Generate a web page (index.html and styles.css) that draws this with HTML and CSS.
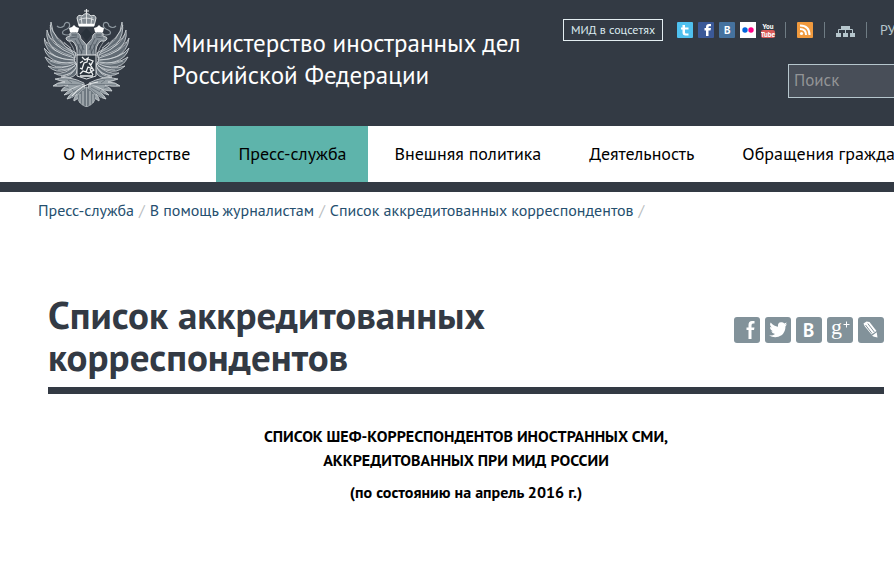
FILE: index.html
```html
<!DOCTYPE html>
<html lang="ru">
<head>
<meta charset="utf-8">
<meta name="viewport" content="width=device-width, initial-scale=1">
<title>Список аккредитованных корреспондентов</title>
<link rel="stylesheet" href="styles.css">
</head>
<body>
<header class="header">
  <svg class="emblem" viewBox="14 9 86 98" aria-hidden="true">
    <defs>
      <g id="half">
        <g fill="#626c75" stroke="#d3d8dc" stroke-width=".8">
          <path d="M46 53Q22 41 21 22Q18 34 27 45Q36 53 45 58Z"/>
          <path d="M44 55Q19 45 17 30Q15 42 26 51Q36 57 45 60Z"/>
          <path d="M44 58Q18 51 14 38Q15 51 27 57Q36 61 45 62Z"/>
          <path d="M44 60Q22 59 14 48Q17 59 29 62Q37 64 46 64Z"/>
          <path d="M45 62Q26 65 15 57Q20 68 32 67Q40 66 47 65Z"/>
          <path d="M46 63Q31 71 18 66Q26 74 37 70Q43 68 47 66Z"/>
          <path d="M46 64Q37 75 24 73Q32 78 41 73Q46 69 48 67Z"/>
          <path d="M47 65Q43 77 31 77Q41 80 46 74L48 68Z"/>
        </g>
        <path d="M20 25Q24 38 41 48M18 34Q25 45 42 52M17 42Q27 52 42 56M18 52Q30 60 43 60M20 61Q32 66 43 63M28 70Q38 70 45 66M33 76Q41 74 46 68M39 41Q43 46 46 55M34 42Q40 46 44 55M30 40Q35 47 43 53" fill="none" stroke="#d3d8dc" stroke-width=".6"/>
        <path d="M27 26Q30 29 34 26Q35 21 39 23Q41 27 37 29Q31 31 33 34Q37 36 41 34" fill="none" stroke="#8f99a1" stroke-width="1.2"/>
        <path d="M40 33Q46 30 50 35Q50 39 54 42L56.500 45V56H47Q48 45 42 41Q37 42 36 39Q35 37 40 36Z" fill="#858e96" stroke="#dfe3e5" stroke-width=".8"/>
        <path d="M40 38L47 37M45 40L52 53M48 38L54 50M42 35L47 35M49 44L48 54M53 45L51 55" stroke="#414b55" stroke-width=".7"/>
        <path d="M40 32L39 28L42 27L44 25L46 27L49 28L48 32Z" fill="#fff"/>
        <g fill="#98a1a7" stroke="#e0e4e6" stroke-width=".7">
          <path d="M54 83Q39 75 25 79Q30 81 35 82Q27 82 23 86Q31 87 38 85Q32 88 31 91Q41 91 54 84Z"/>
          <path d="M54 84Q40 88 34 95Q40 94 44 91Q38 96 37 99Q43 98 47 94Q43 99 44 101Q50 98 55 88Z"/>
        </g>
        <path d="M29 79Q43 78 54 84M27 85Q41 84 52 85M37 95L52 87M41 98L54 88M38 80L42 83M33 86L39 88M42 89L44 92" stroke="#505b64" stroke-width=".6" fill="none"/>
        <path d="M56.500 87Q50 90 47 96Q48 104 56.500 107Z" fill="#6f7981" stroke="#b5bbc0" stroke-width=".7"/>
        <path d="M50 94V103M53 91V105" stroke="#cdd2d5" stroke-width=".9"/>
      </g>
    </defs>
    <use href="#half"/>
    <use href="#half" transform="matrix(-1 0 0 1 113 0)"/>
    <path d="M56.500 9V15M54 11H59" stroke="#e5e8ea" stroke-width="1.200"/>
    <path d="M49 26L47 18Q48 14 52 16Q56.500 11 61 16Q65 14 66 18L64 26Z" fill="#838c94" stroke="#e4e7e9"/>
    <path d="M51 17L52 24M56.500 14V24M62 17L61 24M49 20Q56 16 64 20" fill="none" stroke="#eef0f1" stroke-width=".8"/>
    <path d="M49 25H64" stroke="#fff" stroke-width="2.500"/>
    <path d="M56.500 28L62 34L56.500 41L51 34Z" fill="#29323b"/>
    <path d="M47 55H66V76L56.500 79L47 76Z" fill="#2c353e" stroke="#d9dde0"/>
    <path d="M52 57L55 60L58 58L57 62L54 63L52 69L50 68M58 59L63 61L61 65L59 63L63 69L58 67L56 72M50 74L53 71L59 73L64 70M50 63L53 61M60 69L63 75M50 76H63" fill="none" stroke="#f0f2f3" stroke-width="1.300"/>
    <path d="M42 96Q51 84 68 82" fill="none" stroke="#e9eced" stroke-width="1.200"/>
  </svg>
  <div class="title">Министерство иностранных дел<br>Российской Федерации</div>
  <div class="tools">
    <div class="toolbar">
      <a class="social-label" href="#">МИД в соцсетях</a>
      <div class="social">
        <a href="#" aria-label="Twitter"><svg class="icon" viewBox="0 0 16 16"><rect width="16" height="16" rx="1" fill="#4fc0ef"/><path d="M5.500 3V5.500H4V7.500H5.500V10.500Q5.500 13.500 8.500 13.500H11.500V11.500H9Q8 11.500 8 10.500V7.500H11.500V5.500H8V3Z" fill="#fff"/></svg></a>
        <a href="#" aria-label="Facebook"><svg class="icon" viewBox="0 0 16 16"><rect width="16" height="16" rx="1" fill="#3b5998"/><path d="M8 14V8.500H6.500V6H8V5Q8 2 11 2H13V4.300H11.500Q10.500 4.300 10.500 5.300V6H13L12.500 8.500H10.500V14Z" fill="#fff"/></svg></a>
        <a href="#" aria-label="ВКонтакте"><svg class="icon" viewBox="0 0 16 16"><rect width="16" height="16" rx="1" fill="#45729f"/><text class="glyph" x="5" y="12">B</text></svg></a>
        <a href="#" aria-label="Flickr"><svg class="icon" viewBox="0 0 16 16"><rect width="16" height="16" fill="#fff"/><circle cx="5" cy="8" r="2.700" fill="#0063dc"/><circle cx="11" cy="8" r="2.700" fill="#ff0084"/></svg></a>
        <a href="#" aria-label="YouTube"><svg class="icon" viewBox="0 0 16 16"><text class="tiny" x="7" y="7">You</text><rect y="8" width="14" height="8" rx="2" fill="#d95a59"/><text class="tiny" x="7" y="15">Tube</text></svg></a>
      </div>
      <a class="cell" href="#" aria-label="RSS"><svg class="icon" viewBox="0 0 16 16"><rect width="16" height="16" rx="1" fill="#f19a3e"/><circle cx="4.500" cy="11.500" r="1.600" fill="#fff"/><path d="M3 7Q9 7 9 13M3 3.500Q12.500 3.500 12.500 13" fill="none" stroke="#fff" stroke-width="2"/></svg></a>
      <a class="cell" href="#" aria-label="Карта сайта"><svg class="map" viewBox="0 0 19 16"><path d="M5 4H14V7H5ZM0 11H5V15H0ZM7 11H12V15H7ZM14 11H19V15H14Z" fill="#b6c6cd"/><path d="M2.500 11V7.500H16.500V11M9.500 7V11" fill="none" stroke="#b6c6cd"/></svg></a>
      <a class="cell lang" href="#">РУС</a>
    </div>
    <input class="search" type="search" placeholder="Поиск" aria-label="Поиск">
  </div>
</header>
<nav class="nav">
  <a href="#">О Министерстве</a>
  <a class="active" href="#">Пресс-служба</a>
  <a href="#">Внешняя политика</a>
  <a href="#">Деятельность</a>
  <a href="#">Обращения граждан</a>
</nav>
<div class="crumbs"><a href="#">Пресс-служба</a><span>/</span><a href="#">В помощь журналистам</a><span>/</span><a href="#">Список аккредитованных корреспондентов</a><span>/</span></div>
<main class="main">
  <div class="heading">
    <h1>Список аккредитованных корреспондентов</h1>
    <div class="share">
      <a href="#" aria-label="Facebook"><svg viewBox="0 0 26 26"><path d="M14.500 22V13H12.500V10.500H14.500V8Q14.500 4 18 4H20.500V6.500H19Q17.500 6.500 17.500 8.500V10.500H20.500L20 13H17.500V22Z"/></svg></a>
      <a href="#" aria-label="Twitter"><svg viewBox="0 0 26 26"><path d="M4 18.500Q8 18.700 10 17Q7 16.500 6.300 14.200H8Q5 13 5 10L6.700 10.500Q4 8 5.700 5.500Q9 9.500 13 9.700Q12.500 5.500 16 5.300Q18 5 19.300 6.500L21.700 5.500Q21.300 7 20.200 7.800L22 7.300L20.500 9.200Q20.500 15 16.500 18.300Q10.500 22 4 18.500Z"/></svg></a>
      <a href="#" aria-label="ВКонтакте"><svg viewBox="0 0 26 26"><text class="share-b" x="7" y="20">B</text></svg></a>
      <a href="#" aria-label="Google+"><svg viewBox="0 0 26 26"><text class="share-g" x="4" y="17">g</text><path d="M16.500 7.500H22.500M19.500 4.500V10.500" stroke="#fff"/></svg></a>
      <a href="#" aria-label="LiveJournal"><svg viewBox="0 0 26 26"><path d="M5.500 6.500L8.500 4.500L11.500 5L18.500 14L13.500 17.500L6.500 9Z"/><path d="M14 18.700L18.700 15.300L19.500 20.500L16 19.800Z"/><path d="M7.500 8L14 16.500M9.800 6.500L16.300 15" stroke="#82929a"/></svg></a>
    </div>
  </div>
  <div class="intro">
    <p>СПИСОК ШЕФ-КОРРЕСПОНДЕНТОВ ИНОСТРАННЫХ СМИ,<br>АККРЕДИТОВАННЫХ ПРИ МИД РОССИИ</p>
    <p>(по состоянию на апрель 2016 г.)</p>
  </div>
</main>
</body>
</html>
```
FILE: styles.css
```css
* { box-sizing: border-box; }
body {
  margin: 0;
  overflow-x: hidden;
  background: #fff;
  color: #000;
  font-family: "PT Sans", Roboto, "Noto Sans", sans-serif;
  font-size: 16px;
}
a { color: inherit; text-decoration: none; }
svg { display: block; }

.header {
  display: grid;
  grid-template-columns: 128px 391px 1fr;
  min-height: 126px;
  padding-left: 44px;
  overflow: hidden;
  background: #333a44;
  color: #fff;
}
.emblem { width: 86px; margin-top: 9px; }
.title { padding-top: 27px; font-size: 25px; line-height: 32px; white-space: nowrap; }
.tools { min-width: 0; padding-top: 18px; }
.toolbar { display: flex; align-items: center; height: 24px; }
.social-label {
  flex: none;
  width: 100px;
  border: 1px solid #e4eef2;
  color: #dcebf0;
  font-size: 12px;
  line-height: 20px;
  text-align: center;
  white-space: nowrap;
}
.social { display: flex; flex: none; gap: 5px; padding: 0 8px 0 14px; }
.icon { width: 16px; height: 16px; }
.map { width: 19px; height: 16px; }
.cell { flex: none; height: 16px; padding: 0 11px; border-left: 1px solid #6f7c84; }
.lang { padding-left: 13px; color: #b6c6cd; font-size: 14px; line-height: 16px; }
.glyph { fill: #fff; font-size: 11px; font-weight: bold; }
.tiny { fill: #fff; font-size: 7px; font-weight: bold; text-anchor: middle; }
.search {
  display: block;
  width: 220px;
  height: 34px;
  margin: 22px 0 0 225px;
  padding: 0 5px 2px;
  border: 1px solid #b6c6cd;
  border-radius: 0;
  background: #484e58;
  color: #fff;
  font-family: inherit;
  font-size: 17px;
}
.search::placeholder { color: #929496; opacity: 1; }

.nav {
  display: flex;
  gap: 4px;
  padding-left: 41px;
  overflow: hidden;
  border-bottom: 10px solid #333a44;
}
.nav a { flex: none; padding: 0 22px; font-size: 18px; line-height: 56px; }
.nav .active { background: #5eb4ab; }

.crumbs {
  display: flex;
  flex-wrap: wrap;
  gap: 0 5px;
  padding: 6px 38px 8px;
  color: #b9bdc0;
  font-size: 16px;
  line-height: 24px;
}
.crumbs a { color: #26506f; }

.main { padding: 64px 10px 0 48px; }
.heading {
  display: flex;
  align-items: center;
  justify-content: space-between;
  padding-bottom: 9px;
  border-bottom: 7px solid #333a44;
}
h1 { max-width: 500px; margin: 0; color: #333a44; font-size: 39px; line-height: 42px; }
.share { display: flex; gap: 5px; margin-bottom: 12px; }
.share a { width: 26px; height: 26px; border-radius: 3px; background: #82929a; }
.share svg { fill: #fff; }
.share-b { font-size: 19px; font-weight: bold; }
.share-g { font-family: "Liberation Serif", serif; font-size: 22px; }

.intro { padding-top: 30px; font-size: 16px; font-weight: bold; line-height: 24px; text-align: center; }
.intro p { margin: 0 0 8px; }
```
